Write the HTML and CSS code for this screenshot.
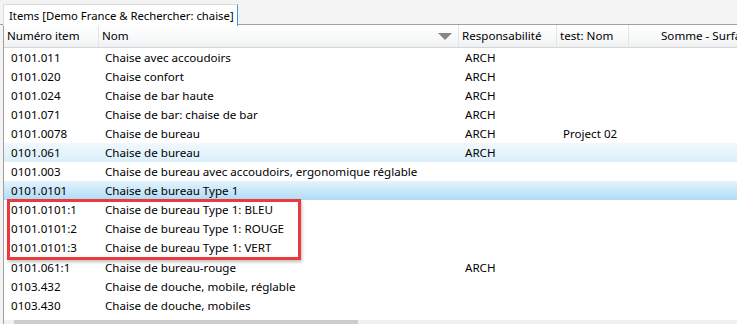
FILE: index.html
```html
<!DOCTYPE html>
<html lang="fr">
<head>
    <meta charset="UTF-8">
    <title>Items</title>
    <link rel="stylesheet" href="styles.css">
</head>
<body>
    <!-- Onglet -->
    <div class="tab-strip">
        <div class="tab">Items [Demo France &amp; Rechercher: chaise]</div>
    </div>

    <div class="grid">
        <div class="grid-head">
            <div class="col c1">Numéro item</div>
            <div class="col c2">Nom <span class="sort-arrow"></span></div>
            <div class="col c3">Responsabilité</div>
            <div class="col c4">test: Nom</div>
            <div class="col c5">Somme - Surface</div>
        </div>

        <div class="grid-body">
            <div class="row"><div class="cell c1">0101.011</div><div class="cell c2">Chaise avec accoudoirs</div><div class="cell c3">ARCH</div><div class="cell c4"></div></div>
            <div class="row"><div class="cell c1">0101.020</div><div class="cell c2">Chaise confort</div><div class="cell c3">ARCH</div><div class="cell c4"></div></div>
            <div class="row"><div class="cell c1">0101.024</div><div class="cell c2">Chaise de bar haute</div><div class="cell c3">ARCH</div><div class="cell c4"></div></div>
            <div class="row"><div class="cell c1">0101.071</div><div class="cell c2">Chaise de bar: chaise de bar</div><div class="cell c3">ARCH</div><div class="cell c4"></div></div>
            <div class="row"><div class="cell c1">0101.0078</div><div class="cell c2">Chaise de bureau</div><div class="cell c3">ARCH</div><div class="cell c4">Project 02</div></div>
            <div class="row hover"><div class="cell c1">0101.061</div><div class="cell c2">Chaise de bureau</div><div class="cell c3">ARCH</div><div class="cell c4"></div></div>
            <div class="row"><div class="cell c1">0101.003</div><div class="cell c2">Chaise de bureau avec accoudoirs, ergonomique réglable</div><div class="cell c3"></div><div class="cell c4"></div></div>
            <div class="row selected"><div class="cell c1">0101.0101</div><div class="cell c2">Chaise de bureau Type 1</div><div class="cell c3"></div><div class="cell c4"></div></div>

            <!-- Variantes encadrées -->
            <div class="marked">
                <div class="row"><div class="cell c1">0101.0101:1</div><div class="cell c2">Chaise de bureau Type 1: BLEU</div></div>
                <div class="row"><div class="cell c1">0101.0101:2</div><div class="cell c2">Chaise de bureau Type 1: ROUGE</div></div>
                <div class="row"><div class="cell c1">0101.0101:3</div><div class="cell c2">Chaise de bureau Type 1: VERT</div></div>
            </div>

            <div class="row"><div class="cell c1">0101.061:1</div><div class="cell c2">Chaise de bureau-rouge</div><div class="cell c3">ARCH</div><div class="cell c4"></div></div>
            <div class="row"><div class="cell c1">0103.432</div><div class="cell c2">Chaise de douche, mobile, réglable</div><div class="cell c3"></div><div class="cell c4"></div></div>
            <div class="row"><div class="cell c1">0103.430</div><div class="cell c2">Chaise de douche, mobiles</div><div class="cell c3"></div><div class="cell c4"></div></div>
            <div class="row"><div class="cell c1">0103.1000</div><div class="cell c2">Chaise Dentiste</div><div class="cell c3">ARCH</div><div class="cell c4"></div></div>
        </div>

        <!-- Barre de défilement horizontale -->
        <div class="hscroll">
            <div class="hscroll-thumb"></div>
        </div>
    </div>
</body>
</html>
```

FILE: styles.css
```css
* {
    box-sizing: border-box;
    margin: 0;
    padding: 0;
}

body {
    background-color: #f3f3f3;
    color: #000;
    font-family: 'Noto Sans', 'Liberation Sans', Arial, sans-serif;
    font-size: 11.6px;
    width: 737px;
    height: 324px;
    overflow: hidden;
}

/* Onglet */
.tab-strip {
    height: 25px;
    padding: 3px 0 0 3px;
    border-bottom: 1px solid #a0a0a0;
    display: flex;
}

.tab {
    width: 235px;
    height: 22px;
    background: #fff;
    border: 1px solid #d9d9d9;
    border-right: 1px solid #3c9dd0;
    border-bottom: none;
    padding: 2px 0 0 5px;
    font-size: 11.3px;
    line-height: 18px;
    white-space: nowrap;
    position: relative;
    top: 1px;
}

/* Grille */
.grid {
    margin-left: 3px;
    border-left: 1px solid #a0a0a0;
    background: #fff;
    height: 312px;
    display: flex;
    flex-direction: column;
}

.grid-head {
    display: flex;
    height: 23px;
    background: linear-gradient(#ffffff, #f7f8f9 60%, #eff0f1);
    border-bottom: 1px solid #d5d5d5;
    white-space: nowrap;
    overflow: hidden;
    flex: none;
}

.col {
    padding: 2px 0 0 3px;
    line-height: 18px;
    border-right: 1px solid #e3e4e5;
    flex: none;
}

.col.c5 {
    border-right: none;
    padding-left: 32px;
    flex: 1;
}

.c1 { width: 95px; }
.c2 { width: 360px; }
.c3 { width: 98px; }
.c4 { width: 72px; }

.col.c2 {
    display: flex;
    justify-content: space-between;
    padding-right: 6px;
}

.sort-arrow {
    width: 0;
    height: 0;
    margin-top: 6px;
    border-left: 7px solid transparent;
    border-right: 7px solid transparent;
    border-top: 7px solid #858585;
}

.grid-body {
    flex: 1;
    overflow: hidden;
}

.row {
    display: flex;
    height: 19px;
    line-height: 19px;
    white-space: nowrap;
}

.cell {
    flex: none;
    padding-left: 6px;
}

.cell.c1 { padding-left: 7px; }

.row.hover {
    background: linear-gradient(#f1f8fd, #daeffb);
}

.row.selected {
    background: linear-gradient(#e4f3fc, #bfe3f8 70%, #b0dcf6);
}

/* Cadre rouge */
.marked {
    width: 294px;
    margin-left: 3px;
    border: 3px solid #ea3a3d;
    box-shadow: 1px 2px 3px rgba(0,0,0,0.25);
    margin-top: -1px;
    margin-bottom: -2px;
}

.marked .row {
    margin-left: -6px;
    height: 19px;
}

.marked .row:first-child {
    margin-top: -2px;
}

.hscroll {
    height: 17px;
    background: #f0f0f0;
    padding-left: 10px;
    flex: none;
}

.hscroll-thumb {
    width: 344px;
    height: 100%;
    background: #cdcdcd;
}
```
